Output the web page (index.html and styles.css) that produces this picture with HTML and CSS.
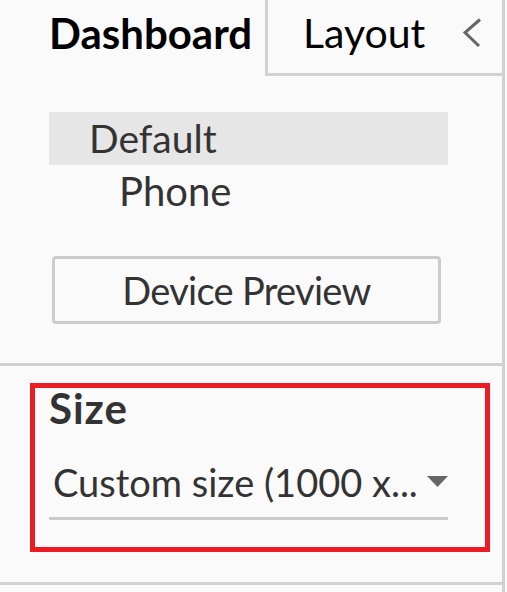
FILE: index.html
```html
<!DOCTYPE html>
<html lang="en">
<head>
<meta charset="utf-8">
<title>Dashboard Layout</title>
<link rel="stylesheet" href="styles.css">
</head>
<body>
<div class="panel">
  <div class="tabs">
    <div class="tab tab-active">Dashboard</div>
    <div class="tab tab-layout">
      <span class="tab-label">Layout</span>
      <svg class="collapse" width="20" height="30" viewBox="0 0 20 30" aria-hidden="true">
        <polyline points="18,1.5 3,14.5 17,28" fill="none" stroke="#666" stroke-width="3"/>
      </svg>
    </div>
  </div>
  <div class="section device-section">
    <ul class="device-list">
      <li class="device selected">Default</li>
      <li class="device sub">Phone</li>
    </ul>
    <button class="preview-btn" type="button">Device Preview</button>
  </div>
  <div class="section size-section">
    <div class="highlight">
      <div class="size-title">Size</div>
      <div class="select">
        <span class="select-value">Custom size (1000 x...</span>
        <svg class="caret" width="21" height="11" viewBox="0 0 21 11" aria-hidden="true">
          <polygon points="0,0 21,0 10.5,11" fill="#666"/>
        </svg>
      </div>
    </div>
  </div>
</div>
</body>
</html>
```

FILE: styles.css
```css
html, body {
  margin: 0;
  padding: 0;
  background: #fafafa;
}

body {
  font-family: Lato, "Liberation Sans", sans-serif;
  font-size: 40px;
  color: #333;
  width: 507px;
  height: 592px;
  overflow: hidden;
}

.panel {
  width: 502px;
  height: 592px;
  border-right: 3px solid #d1d1d1;
}

.tabs {
  display: flex;
  height: 76px;
}

.tab {
  box-sizing: border-box;
  padding-top: 9px;
  line-height: 48px;
}

.tab-active {
  width: 265px;
  padding-left: 49px;
  font-size: 42px;
  font-weight: 700;
  color: #000;
}

.tab-layout {
  flex: 1;
  display: flex;
  align-items: flex-start;
  padding-left: 35px;
  border-left: 3px solid #d1d1d1;
  border-bottom: 3px solid #d1d1d1;
  font-size: 41px;
  color: #000;
}

.collapse {
  flex-shrink: 0;
  margin-left: auto;
  margin-right: 20px;
  margin-top: 9px;
}

.section {
  border-bottom: 3px solid #d1d1d1;
}

.device-section {
  padding: 36px 0 39px 49px;
}

.device-list {
  list-style: none;
  margin: 0;
  padding: 0;
  width: 399px;
}

.device {
  height: 53px;
  line-height: 53px;
}

.device.selected {
  background: #e6e6e6;
  padding-left: 40px;
  font-size: 39px;
}

.device.sub {
  padding-left: 70px;
}

.preview-btn {
  display: block;
  box-sizing: border-box;
  margin: 38px 0 0 3px;
  width: 389px;
  height: 68px;
  border: 3px solid #cccccc;
  border-radius: 4px;
  background: #fafafa;
  font-family: inherit;
  font-size: 38px;
  letter-spacing: -0.7px;
  color: #333;
  padding: 0;
}

.size-section {
  padding: 17px 0 30px 0;
}

.highlight {
  box-sizing: border-box;
  margin-left: 30px;
  width: 460px;
  height: 169px;
  border: 5px solid #ed1c24;
  padding: 0 0 0 14px;
}

.size-title {
  font-size: 42px;
  font-weight: 700;
  letter-spacing: 1px;
  line-height: 40px;
}

.select {
  display: flex;
  align-items: center;
  width: 399px;
  height: 71px;
  margin-top: 18px;
  border-bottom: 3px solid #cccccc;
}

.select-value {
  padding-left: 4px;
  font-size: 38px;
  white-space: nowrap;
  overflow: hidden;
}

.caret {
  flex-shrink: 0;
  margin-left: auto;
}
```
